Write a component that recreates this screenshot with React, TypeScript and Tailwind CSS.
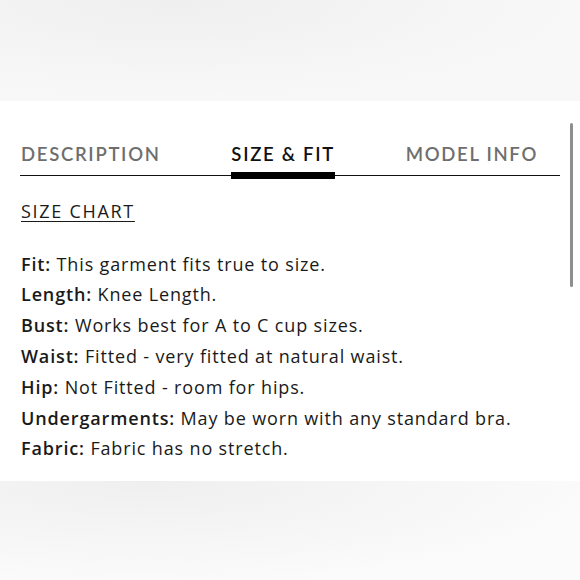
const rows: [string, string][] = [
  ["Fit:", "This garment fits true to size."],
  ["Length:", "Knee Length."],
  ["Bust:", "Works best for A to C cup sizes."],
  ["Waist:", "Fitted - very fitted at natural waist."],
  ["Hip:", "Not Fitted - room for hips."],
  ["Undergarments:", "May be worn with any standard bra."],
  ["Fabric:", "Fabric has no stretch."],
]

export default function App() {
  return (
    <div className="w-[580px] h-[580px] flex flex-col bg-white font-['Lato',sans-serif] overflow-hidden">
      <div className="h-[101px] bg-[radial-gradient(ellipse_at_30%_0%,#efefef,#f8f8f8_70%)]" />
      <div className="relative h-[380px] bg-white px-[20px]">
        <div className="absolute right-[7px] top-[22px] w-[3px] h-[164px] rounded-full bg-[#8e8e8e]" />
        <div className="flex items-end justify-between pr-[2px] pt-[40px] border-b-[1.5px] border-[#111]">
          <button className="pl-[1px] pb-[6px] text-[18.5px] font-semibold tracking-[1.7px] text-[#6e6e6e]">DESCRIPTION</button>
          <button className="relative pb-[6px] text-[18.5px] font-semibold tracking-[1.7px] text-[#111]">
            SIZE &amp; FIT
            <span className="absolute left-0 right-0 bottom-[-4px] h-[7px] bg-black" />
          </button>
          <button className="pr-[20px] pb-[6px] text-[18.5px] font-semibold tracking-[1.7px] text-[#6e6e6e]">MODEL INFO</button>
        </div>
        <div className="pl-[1px] pt-[20px] text-[18px] font-['Open_Sans',sans-serif] text-[#1a1a1a]">
          <a className="block w-fit leading-[30.8px] underline underline-offset-[3px] decoration-[1px] tracking-[1.7px]">SIZE CHART</a>
          <div className="mt-[22px] flex flex-col">
            {rows.map(([k, v]) => (
              <p key={k} className="leading-[30.8px] tracking-[0.85px]">
                <span className="font-semibold">{k}</span> {v}
              </p>
            ))}
          </div>
        </div>
      </div>
      <div className="flex-1 bg-[radial-gradient(ellipse_at_25%_0%,#efefef,#fbfbfb_75%)]" />
    </div>
  )
}
